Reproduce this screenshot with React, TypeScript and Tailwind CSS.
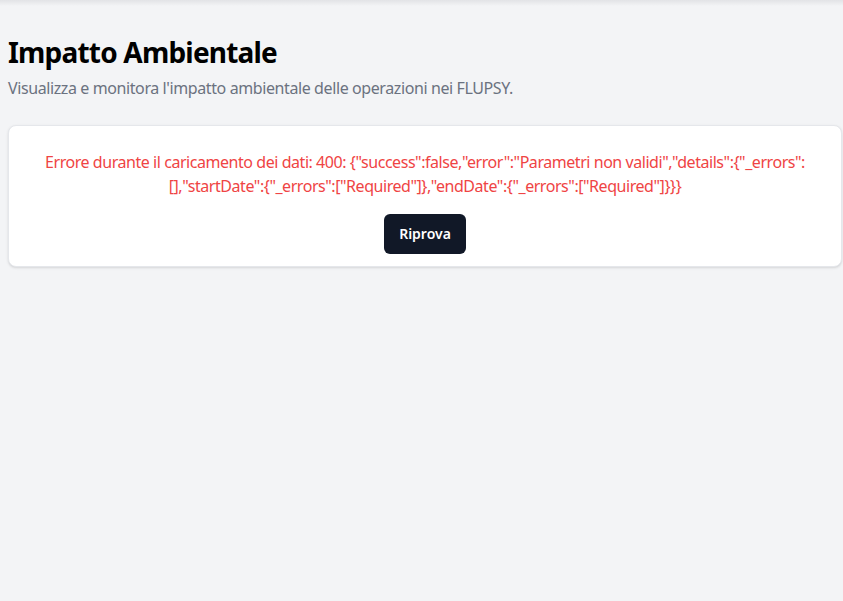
import React from 'react';

const errorMessage =
    'Errore durante il caricamento dei dati: 400: {"success":false,"error":"Parametri non validi","details":{"_errors":[],"startDate":{"_errors":["Required"]},"endDate":{"_errors":["Required"]}}}';

const App = () => {
    return (
        <div className="min-h-screen w-full bg-[#f3f4f6] font-['Noto_Sans',sans-serif]">
            {/* shadow from the sticky header above */}
            <div className="h-1.5 w-full bg-gradient-to-b from-[#e2e3e6] to-[#f3f4f6]" />

            <main className="pl-2 pr-px pt-7">
                <h1 className="text-[28px] leading-9 font-bold text-black tracking-[-0.8px]">Impatto Ambientale</h1>
                <p className="mt-1.5 text-base text-[#6b7280] tracking-[-0.4px]">
                    Visualizza e monitora l'impatto ambientale delle operazioni nei FLUPSY.
                </p>

                <div className="mt-[25px] rounded-lg border border-[#e5e7eb] bg-white shadow-sm px-6 pt-6 pb-3">
                    <div className="flex flex-col items-center">
                        <p className="text-center text-base leading-6 text-[#ef4444] tracking-[-0.45px]">{errorMessage}</p>
                        <button className="mt-4 h-10 rounded-md bg-[#111827] px-[15px] text-sm font-semibold text-white">
                            Riprova
                        </button>
                    </div>
                </div>
            </main>
        </div>
    );
};

export default App;
